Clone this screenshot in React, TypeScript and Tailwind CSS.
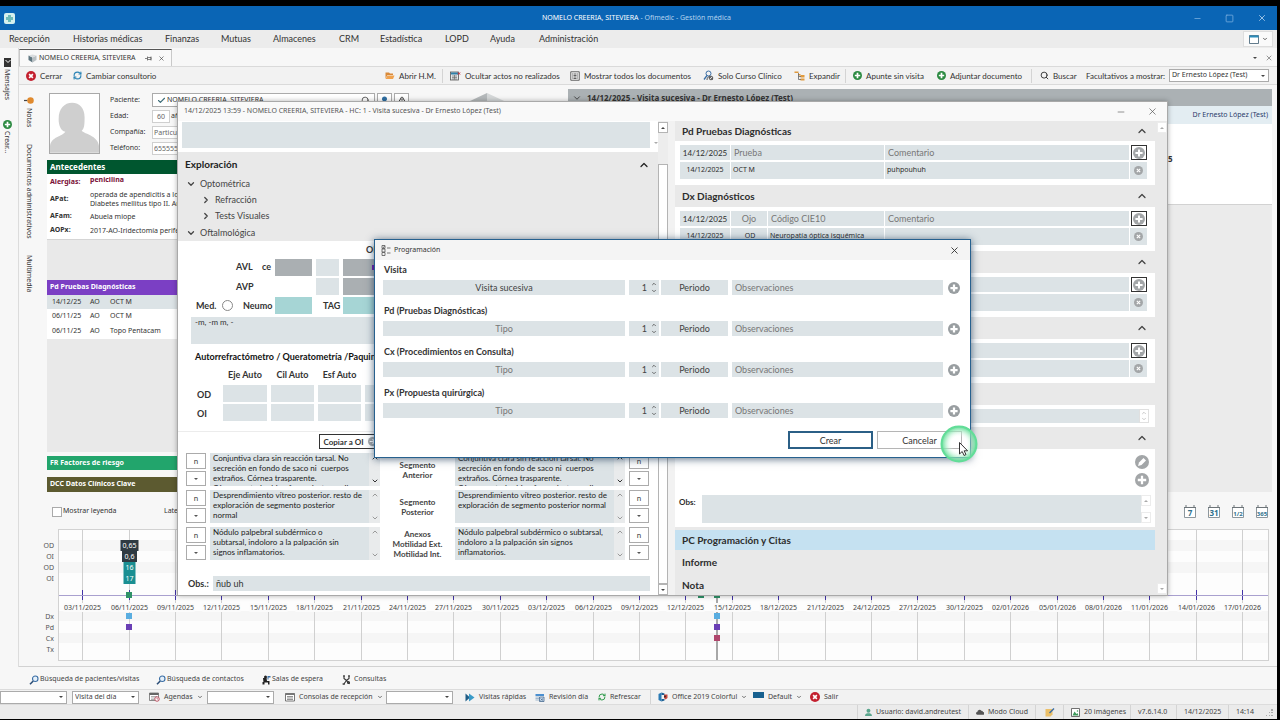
import type { ReactNode } from "react";
import { Check, ChevronDown, ChevronRight, ChevronUp, Minus, RefreshCw, Search, Square, TriangleAlert, X } from "lucide-react";

const menu = [
  { label: "Recepción", width: "w-[64px]" },
  { label: "Historias médicas", width: "w-[92px]" },
  { label: "Finanzas", width: "w-[56px]" },
  { label: "Mutuas", width: "w-[52px]" },
  { label: "Almacenes", width: "w-[66px]" },
  { label: "CRM", width: "w-[41px]" },
  { label: "Estadística", width: "w-[65px]" },
  { label: "LOPD", width: "w-[45px]" },
  { label: "Ayuda", width: "w-[49px]" },
  { label: "Administración", width: "w-[80px]" },
];

const antecedentes = [
  { label: "APat:", lines: ["operada de apendicitis a los 12 años", "Diabetes mellitus tipo II. Artrosis"], height: "h-[20px]" },
  { label: "AFam:", lines: ["Abuela miope"], height: "h-[14px]" },
  { label: "AOPx:", lines: ["2017-AO-Iridectomía periférica"], height: "h-[15px]" },
];

const pruebas = [
  { date: "14/12/25", eye: "AO", name: "OCT M" },
  { date: "06/11/25", eye: "AO", name: "OCT M" },
  { date: "06/11/25", eye: "AO", name: "Topo Pentacam" },
];

const segments = [
  {
    label: ["Segmento", "Anterior"],
    left: "Conjuntiva clara sin reacción tarsal. No\nsecreción en fondo de saco ni  cuerpos\nextraños. Córnea trasparente.\nCámara anterior bien formada, tranquila",
    right: "Conjuntiva clara sin reacción tarsal. No\nsecreción en fondo de saco ni  cuerpos\nextraños. Córnea trasparente.\nCámara anterior bien formada, tranquila",
    scroll: true,
  },
  {
    label: ["Segmento", "Posterior"],
    left: "Desprendimiento vítreo posterior. resto de\nexploración de segmento posterior\nnormal",
    right: "Desprendimiento vítreo posterior. resto de\nexploración de segmento posterior normal",
    scroll: false,
  },
  {
    label: ["Anexos", "Motilidad Ext.", "Motilidad Int."],
    left: "Nódulo palpebral subdérmico o\nsubtarsal, indoloro a la palpación sin\nsignos inflamatorios.",
    right: "Nódulo palpebral subdérmico o subtarsal,\nindoloro a la palpación sin signos\ninflamatorios.",
    scroll: false,
  },
];

const plans = [
  { id: "visita", label: "Visita", value: "Visita sucesiva" },
  { id: "pd", label: "Pd (Pruebas Diagnósticas)", value: "" },
  { id: "cx", label: "Cx (Procedimientos en Consulta)", value: "" },
  { id: "px", label: "Px (Propuesta quirúrgica)", value: "" },
];

const dates = [
  "03/11/2025", "06/11/2025", "09/11/2025", "12/11/2025", "15/11/2025", "18/11/2025", "21/11/2025", "24/11/2025", "27/11/2025",
  "30/11/2025", "03/12/2025", "06/12/2025", "09/12/2025", "12/12/2025", "15/12/2025", "18/12/2025", "21/12/2025", "24/12/2025",
  "27/12/2025", "30/12/2025", "02/01/2026", "05/01/2026", "08/01/2026", "11/01/2026", "14/01/2026", "17/01/2026",
];

/* ---------- icons ---------- */

function Disc({ color, size = 10, cross = false, width = 2.6 }: { color: string; size?: number; cross?: boolean; width?: number }) {
  return (
    <svg width={size} height={size} viewBox="0 0 16 16" className="shrink-0">
      <circle cx="8" cy="8" r="8" fill={color} />
      <path d={cross ? "M5 5l6 6M11 5l-6 6" : "M8 3.2v9.6M3.2 8h9.6"} stroke="#fff" strokeWidth={width} />
    </svg>
  );
}

function GreenPlus() {
  return <Disc color="#2b8a41" size={9} width={3} />;
}

function FolderIcon() {
  return (
    <svg width="10" height="9" viewBox="0 0 20 18" className="shrink-0">
      <path d="M1 3h7l2 2h6v3H5l-4 7z" fill="#d98a3a" />
      <path d="M5 9h14l-3 7H1z" fill="#f0a24e" />
    </svg>
  );
}

function HideIcon() {
  return (
    <svg width="11" height="10" viewBox="0 0 22 20" className="shrink-0">
      <rect x="1" y="2" width="16" height="16" fill="#e4e8ea" stroke="#555" strokeWidth="1.6" />
      <path d="M2 3h14v4H2z" fill="#2f7fa8" />
      <path d="M4 10h10M4 13h10M4 16h10M9 8v9" stroke="#666" strokeWidth="1.3" />
      <path d="M16 3l4 4M20 3l-4 4" stroke="#cc2030" strokeWidth="2" />
    </svg>
  );
}

function DocIcon() {
  return (
    <svg width="10" height="10" viewBox="0 0 20 20" className="shrink-0">
      <path d="M1.5 1.5h17v17h-17z" fill="#f4f4f4" stroke="#555" strokeWidth="1.8" />
      <path d="M5 4v12M15 4v12" stroke="#888" strokeWidth="1.2" />
      <path d="M7 6h6M7 9h6M7 12h6M7 15h6" stroke="#444" strokeWidth="1.7" />
    </svg>
  );
}

function PersonSearchIcon() {
  return (
    <svg width="11" height="11" viewBox="0 0 22 22" className="shrink-0" fill="none">
      <circle cx="11" cy="7" r="5" stroke="#3a6ea5" strokeWidth="2" />
      <path d="M8 11l-6 8" stroke="#3a6ea5" strokeWidth="2.6" />
      <path d="M8 20c0-4 2-6 4-7l8 6" stroke="#444" strokeWidth="1.8" />
      <circle cx="16" cy="16" r="3.6" stroke="#444" strokeWidth="1.8" />
    </svg>
  );
}

function TreeIcon() {
  return (
    <svg width="11" height="10" viewBox="0 0 22 20" className="shrink-0">
      <path d="M1 1h8v3H1zM8 6h5v3H8z" fill="#e09a3e" />
      <path d="M13 8h8v5h-8zM13 15h8v4h-8z" fill="#e09a3e" />
      <path d="M9 4v13h5M9 11h5" stroke="#666" strokeWidth="1.6" fill="none" />
    </svg>
  );
}

function CubeIcon() {
  return (
    <svg width="9" height="9" viewBox="0 0 18 18" className="shrink-0">
      <path d="M1 3l8 4v10l-8-5z" fill="#5f7680" />
      <path d="M9 7l8-4v9l-8 5z" fill="#b9c0c3" />
      <path d="M1 3l8-2 8 2-8 4z" fill="#d9dddf" />
    </svg>
  );
}

function PinIcon() {
  return (
    <svg width="7" height="7" viewBox="0 0 14 14" className="shrink-0" fill="none" stroke="#555" strokeWidth="1.4">
      <path d="M0 7h5M5 3v8M5 5h7v4H5M12 3v8" />
    </svg>
  );
}

function WindowIcon() {
  return (
    <svg width="10" height="9" viewBox="0 0 20 18" className="shrink-0">
      <path d="M1 1h18v16H1z" fill="#fff" stroke="#3b5a70" strokeWidth="1.6" />
      <path d="M1 1h18v4H1z" fill="#2b8cba" />
    </svg>
  );
}

function MagnifierIcon() {
  return (
    <svg width="10" height="10" viewBox="0 0 20 20" className="shrink-0">
      <circle cx="12.5" cy="7.5" r="5.5" fill="#e5f0fa" stroke="#3a6ea5" strokeWidth="2.2" />
      <path d="M8.5 12L2 18.5" stroke="#2d4f78" strokeWidth="3.2" />
    </svg>
  );
}

function ChairIcon() {
  return (
    <svg width="9" height="10" viewBox="0 0 18 20" className="shrink-0" fill="#222">
      <circle cx="7" cy="4" r="3" />
      <path d="M2 6h7l1 6h5v7h-3v-4H3z" />
      <path d="M11 2h6v3h-4v4h-2z" fill="#3a6ea5" />
      <path d="M1 14h4v5H1z" />
    </svg>
  );
}

function ConsultIcon() {
  return (
    <svg width="9" height="10" viewBox="0 0 18 20" className="shrink-0" fill="none" stroke="#333" strokeWidth="2.2">
      <path d="M4 1v6l5 4 5-4V1" />
      <path d="M2 2h4M12 2h4" />
      <path d="M9 11l-6 8M9 11l6 7" />
      <circle cx="13" cy="15" r="2" />
      <path d="M1 18h5" />
    </svg>
  );
}

function AgendaIcon() {
  return (
    <svg width="11" height="10" viewBox="0 0 22 20" className="shrink-0">
      <path d="M1 2h18v15H1z" fill="#fff" stroke="#666" strokeWidth="1.5" />
      <path d="M1 2h18v4H1z" fill="#666" />
      <path d="M4 9h12M4 12h8M4 15h7" stroke="#888" strokeWidth="1.3" />
      <circle cx="16" cy="14" r="4.5" fill="#fff" stroke="#b84556" strokeWidth="1.8" />
      <path d="M16 11.500V14h2.500" stroke="#b84556" strokeWidth="1.3" fill="none" />
    </svg>
  );
}

function ConsoleIcon() {
  return (
    <svg width="10" height="9" viewBox="0 0 20 18" className="shrink-0">
      <path d="M1 1h18v15H1z" fill="#fff" stroke="#555" strokeWidth="1.6" />
      <path d="M1 1h18v3H1z" fill="#777" />
      <path d="M4 7h12M4 10h12M4 13h12" stroke="#666" strokeWidth="1.4" />
    </svg>
  );
}

function FastIcon() {
  return (
    <svg width="10" height="9" viewBox="0 0 20 18" className="shrink-0">
      <path d="M1 1l9 8-9 8z" fill="#1f5c85" />
      <path d="M8 1l11 8-11 8z" fill="#3a9bc8" />
    </svg>
  );
}

function ReviewIcon() {
  return (
    <svg width="10" height="9" viewBox="0 0 20 18" className="shrink-0">
      <path d="M1 2h17v4H1z" fill="#4a8fd0" />
      <path d="M1 8h7M1 11h7M1 14h7" stroke="#8aa8c4" strokeWidth="1.6" />
      <path d="M9 8h9v9H9z" fill="#cfe0f0" stroke="#3d6288" strokeWidth="1.5" />
      <path d="M11 11l5 4M16 11l-5 4" stroke="#3d6288" strokeWidth="1.4" />
    </svg>
  );
}

function OfficeIcon() {
  return (
    <svg width="10" height="10" viewBox="0 0 20 20" className="shrink-0">
      <path d="M1 4l6-3v18l-6-3z" fill="#2a7bb5" />
      <path d="M7 1l6 2v3H7z" fill="#1c5f93" />
      <path d="M7 14h6v3l-6 2z" fill="#1c5f93" />
      <path d="M12 5h7v7l-4 3-3-3z" fill="#c8463c" />
      <circle cx="14" cy="9" r="2" fill="#3a2a2a" />
    </svg>
  );
}

function CalendarIcon({ text }: { text: string }) {
  return (
    <svg width="14" height="14" viewBox="0 0 14 14">
      <path d="M1.5 2.5h11v10h-11z" fill="#fff" stroke="#8d979d" />
      <path d="M1 2h12v1H1z" fill="#6d7479" />
      <path d="M3 0v3M11 0v3" stroke="#6d7479" />
      <text x="7" y="10.5" textAnchor="middle" fontSize={text.length > 2 ? 6 : 8} fontWeight="700" fill="#2f718d">
        {text}
      </text>
    </svg>
  );
}

/* ---------- small parts ---------- */

function ToolButton({ icon, label, width, caret }: { icon: ReactNode; label: string; width: string; caret?: boolean }) {
  return (
    <button type="button" className={`flex shrink-0 items-center gap-1 whitespace-nowrap ${width}`}>
      {icon}
      {label}
      {caret && <ChevronDown size={6} strokeWidth={3} />}
    </button>
  );
}

function Combo({ id, label, value, width }: { id?: string; label: string; value?: string; width: string }) {
  return (
    <span className={`relative flex h-[13px] shrink-0 items-center border border-[#ababab] bg-white ${width}`}>
      <select id={id} aria-label={label} className="h-full w-full appearance-none px-[2px] outline-none">
        <option>{value ?? ""}</option>
      </select>
      <svg width="4" height="2" viewBox="0 0 4 2" className="pointer-events-none absolute right-[3px]">
        <path d="M0 0h4L2 2z" fill="#444" />
      </svg>
    </span>
  );
}

function Divider() {
  return <span className="h-[14px] w-px shrink-0 bg-[#d4d4d4]" />;
}

function ScrollButton({ up, faint }: { up?: boolean; faint?: boolean }) {
  return (
    <button
      type="button"
      aria-label={up ? "Subir" : "Bajar"}
      className={`flex h-[11px] w-[10px] items-center justify-center border bg-white ${faint ? "border-[#ececec]" : "border-[#b4b4b4]"}`}
    >
      <svg width="4" height="2" viewBox="0 0 4 2">
        <path d={up ? "M0 2h4L2 0z" : "M0 0h4L2 2z"} fill={faint ? "#aaa" : "#444"} />
      </svg>
    </button>
  );
}

function Notes({ label, text, scroll }: { label: string; text: string; scroll: boolean }) {
  return (
    <div className="flex h-[33px] w-[170px] shrink-0">
      <textarea
        aria-label={label}
        defaultValue={text}
        className="w-[159px] resize-none overflow-hidden bg-[#dce3e6] pl-[3px] text-[8px] leading-[10px] whitespace-pre text-[#222] outline-none"
      />
      <span className={`flex w-[11px] flex-col items-center justify-between bg-[#e9ebec] py-px ${scroll ? "text-[#333]" : "text-[#9a9a9a]"}`}>
        <ChevronUp size={8} strokeWidth={3} />
        <ChevronDown size={8} strokeWidth={3} />
      </span>
    </div>
  );
}

function NormalButtons() {
  return (
    <div className="flex w-[20px] shrink-0 flex-col gap-[2px]">
      <button type="button" className="h-[16px] border border-[#ababab] bg-white text-[8px] leading-none text-[#444]">
        n
      </button>
      <button type="button" aria-label="Más" className="flex h-[15px] items-center justify-center border border-[#ababab] bg-white">
        <svg width="4" height="2" viewBox="0 0 4 2">
          <path d="M0 0h4L2 2z" fill="#555" />
        </svg>
      </button>
    </div>
  );
}

function SectionHead({ title, first, open = true }: { title?: string; first?: boolean; open?: boolean }) {
  return (
    <div className={`flex shrink-0 items-center justify-between bg-[#e9e9e9] px-[7px] ${first ? "h-[20px]" : "h-[22px]"}`}>
      <h3 className="text-[10px] font-bold">{title}</h3>
      {open && <ChevronUp size={12} strokeWidth={2.5} className="text-[#444]" />}
    </div>
  );
}

function SectionRows({ fields, values }: { fields: string[]; values: string[] }) {
  const cols = fields.length === 3 ? "grid-cols-[50px_36px_116px_1fr_17px]" : "grid-cols-[50px_153px_1fr_17px]";
  return (
    <div className="h-[44px] shrink-0 bg-white pt-1 pr-2 pl-[5px]">
      <div className={`grid h-[15px] items-stretch gap-x-px ${cols}`}>
        <span className="flex items-center justify-center bg-[#dce3e6] text-[8px]">14/12/2025</span>
        {fields.map((field) => (
          <input key={field} aria-label={field} placeholder={field} className={`min-w-0 bg-[#dce3e6] px-[3px] text-[9px] outline-none placeholder:text-[#777] ${field === "Ojo" ? "text-center" : ""}`} />
        ))}
        <button type="button" aria-label="Añadir" className="ml-px flex items-center justify-center border border-[#333] bg-white">
          <Disc color="#a3a6a8" size={12} />
        </button>
      </div>
      <div className={`mt-[2px] grid h-[17px] items-stretch gap-x-px text-[7px] ${cols}`}>
        <span className="flex items-center justify-center bg-[#dce3e6] font-['Noto_Sans',sans-serif]">14/12/2025</span>
        {values.map((value, i) => (
          <span key={i} className={`flex items-center overflow-hidden bg-[#dce3e6] pl-[2px] font-['Noto_Sans',sans-serif] whitespace-nowrap ${value === "OD" ? "justify-center" : ""}`}>
            {value}
          </span>
        ))}
        <button type="button" aria-label="Quitar" className="flex items-center justify-center bg-[#dce3e6]">
          <Disc color="#a3a6a8" size={9} cross width={2} />
        </button>
      </div>
    </div>
  );
}

/* ---------- main window ---------- */

function Toolbar() {
  return (
    <div className="flex h-[19px] shrink-0 items-center border-y border-[#dadada] bg-[#f2f2f2] pr-2 pl-[7px] text-[8px]">
      <ToolButton width="w-[47px]" icon={<Disc color="#c3202f" cross />} label="Cerrar" />
      <ToolButton width="w-[90px]" icon={<RefreshCw size={9} strokeWidth={3} className="text-[#2b83b5]" />} label="Cambiar consultorio" />
      <div className="ml-auto flex items-center">
        <ToolButton width="w-[57px]" icon={<FolderIcon />} label="Abrir H.M." />
        <Divider />
        <ToolButton width="ml-[7px] w-[120px]" icon={<HideIcon />} label="Ocultar actos no realizados" />
        <ToolButton width="w-[133px]" icon={<DocIcon />} label="Mostrar todos los documentos" />
        <ToolButton width="w-[91px]" icon={<PersonSearchIcon />} label="Solo Curso Clínico" />
        <ToolButton width="w-[51px]" icon={<TreeIcon />} label="Expandir" />
        <Divider />
        <ToolButton width="ml-[7px] w-[84px]" icon={<GreenPlus />} label="Apunte sin visita" />
        <ToolButton width="w-[94px]" icon={<GreenPlus />} label="Adjuntar documento" />
        <Divider />
        <ToolButton width="ml-2 w-[46px]" icon={<Search size={9} strokeWidth={2.5} />} label="Buscar" />
        <label htmlFor="facultativos" className="w-[83px] whitespace-nowrap">Facultativos a mostrar:</label>
        <span className="font-['Noto_Sans',sans-serif] text-[7px]">
          <Combo id="facultativos" label="Facultativos a mostrar" value="Dr Ernesto López (Test)" width="w-[100px]" />
        </span>
      </div>
    </div>
  );
}

function PatientForm() {
  return (
    <div className="flex h-[75px] shrink-0 pt-2 pl-[2px]">
      <svg width="51" height="61" viewBox="0 0 51 61" className="shrink-0 border border-[#a9a9a9] bg-white">
        <path d="M9 26C9 15 15 9 23 9s13 6 13 15c0 6 0 12-3 14 2 3 17 5 18 16v7H0v-7c1-10 13-10 16-15-5-1-7-7-7-13z" fill="#cfcfcf" />
      </svg>
      <div className="ml-[10px] flex flex-col gap-[2px]">
        <div className="flex h-[14px] items-center">
          <label htmlFor="paciente" className="w-[42px]">Paciente:</label>
          <span className="flex h-full w-[223px] items-center border border-[#ababab] bg-white pl-1">
            <Check size={9} strokeWidth={3} className="text-[#3c6c78]" />
            <input id="paciente" defaultValue="NOMELO CREERIA, SITEVIERA" className="min-w-0 flex-1 pl-px outline-none" />
            <Search size={9} className="mr-1" />
          </span>
          <button type="button" aria-label="Ficha" className="ml-[2px] flex h-full w-[15px] items-center justify-center border border-[#ababab] bg-white">
            <svg width="7" height="9" viewBox="0 0 14 18"><path d="M7 1a5 5 0 015 5c0 4-5 5-5 11 0-6-5-7-5-11a5 5 0 015-5z" fill="#2f6fa3" /></svg>
          </button>
          <button type="button" aria-label="Avisos" className="ml-[2px] flex h-full w-[15px] items-center justify-center border border-[#ababab] bg-white">
            <TriangleAlert size={8} strokeWidth={3} />
          </button>
        </div>
        <div className="flex h-[14px] items-center">
          <label htmlFor="edad" className="w-[42px]">Edad:</label>
          <input id="edad" defaultValue="60" className="h-[13px] w-[18px] border border-[#cfcfcf] bg-white text-center text-[#666] outline-none" />
          <span className="ml-px">años</span>
        </div>
        <div className="flex h-[14px] items-center">
          <label htmlFor="compania" className="w-[42px]">Compañía:</label>
          <input id="compania" defaultValue="Particular" className="h-[13px] w-[120px] border border-[#cfcfcf] bg-white px-px text-[#666] outline-none" />
        </div>
        <div className="flex h-[14px] items-center">
          <label htmlFor="telefono" className="w-[42px]">Teléfono:</label>
          <input id="telefono" defaultValue="655555555" className="h-[13px] w-[120px] border border-[#cfcfcf] bg-white px-px text-[#666] outline-none" />
        </div>
      </div>
      <svg width="72" height="34" viewBox="0 0 72 34" className="ml-[42px] shrink-0">
        <path d="M36 0L0 17l36 17z" fill="#b5b9bb" />
        <path d="M36 0l36 17-36 17z" fill="#d5d8d9" />
      </svg>
    </div>
  );
}

function PatientSummary() {
  return (
    <div className="flex w-[518px] shrink-0 flex-col font-['Noto_Sans',sans-serif] text-[7px]">
      <PatientForm />
      <h2 className="flex h-[14px] shrink-0 items-center bg-[#00562f] px-[3px] text-[8px] font-bold text-white">Antecedentes</h2>
      <div className="h-[66px] shrink-0 border-b border-[#d5d5d5] bg-white px-[3px] pt-px">
        <div className="flex h-[14px] font-bold text-[#7a1038]">
          <span className="w-[40px] pt-[2px]">Alergias:</span>
          <span className="leading-[9px]">penicilina</span>
        </div>
        {antecedentes.map((row) => (
          <div key={row.label} className={`flex items-center ${row.height}`}>
            <span className="w-[40px] font-bold">{row.label}</span>
            <div className="leading-[9px]">
              {row.lines.map((line) => (
                <p key={line} className="whitespace-nowrap">{line}</p>
              ))}
            </div>
          </div>
        ))}
      </div>
      <div className="h-[40px] shrink-0 bg-[#e9e9e9]" />
      <h2 className="flex h-[15px] shrink-0 items-center bg-[#7b3fc4] px-[3px] font-bold text-white">Pd Pruebas Diagnósticas</h2>
      <table className="w-full shrink-0 bg-white text-left">
        <tbody>
          {pruebas.map((row, i) => (
            <tr key={i} className={i === 0 ? "h-[14px] bg-[#dce3e6]" : "h-[15px]"}>
              <td className="w-[43px] p-0 pl-[5px]">{row.date}</td>
              <td className="w-[20px] p-0">{row.eye}</td>
              <td className="p-0">{row.name}</td>
            </tr>
          ))}
        </tbody>
      </table>
      <div className="h-[113px] shrink-0 bg-[#e9e9e9]" />
      <h2 className="mt-1 flex h-[14px] shrink-0 items-center bg-[#22a56c] px-[3px] font-bold text-white">FR Factores de riesgo</h2>
      <h2 className="mt-[7px] flex h-[15px] shrink-0 items-center bg-[#5c5a30] px-[3px] font-bold text-white">DCC Datos Clínicos Clave</h2>
    </div>
  );
}

function VisitList() {
  return (
    <div className="mt-1 ml-[3px] flex min-w-0 flex-1 flex-col font-['Noto_Sans',sans-serif] text-[7px]">
      <h2 className="flex h-[17px] shrink-0 items-center gap-[5px] bg-[#abb1b4] pl-1 text-[8px] font-bold">
        <ChevronDown size={10} />
        14/12/2025 - Visita sucesiva - Dr Ernesto López (Test)
      </h2>
      <p className="flex h-[18px] shrink-0 items-center justify-end bg-[#e3edf2] pr-1 text-[#2a3a6a]">Dr Ernesto López (Test)</p>
      <div className="flex h-[81px] shrink-0 justify-end border-b border-[#d2d2d2] bg-white">
        <span className="w-[104px] pt-[29px] text-[8px] font-bold">5</span>
      </div>
      <div className="flex-1 bg-[#ebebeb]" />
    </div>
  );
}

const eyeRows = [
  { name: "OD", y: 16 },
  { name: "OI", y: 27 },
  { name: "OD", y: 38 },
  { name: "OI", y: 49 },
  { name: "Dx", y: 87 },
  { name: "Pd", y: 98 },
  { name: "Cx", y: 109 },
  { name: "Tx", y: 120 },
];

const values = [
  { text: "0,65", y: 11, width: 18, color: "#2f3b43" },
  { text: "0,6", y: 22, width: 15, color: "#2f3b43" },
  { text: "16", y: 33, width: 12, color: "#1a8f92" },
  { text: "17", y: 44, width: 12, color: "#1a8f92" },
];

// one column every three days
const tickX = (i: number) => Math.floor(42.7 + i * 46.4) + 0.5;

function Timeline() {
  return (
    <svg width="100%" height="132" className="shrink-0 font-['Noto_Sans',sans-serif] text-[7px]">
      <rect x="18.5" y="0.5" width="1210" height="131" fill="#fdfdfd" stroke="#d2d2d2" />
      <path d="M19 11h1209v11H19zM19 33h1209v11H19zM19 82h1209v10H19zM19 104h1209v10H19z" fill="#f6f6f6" />
      <path d="M677 66v65" stroke="#a8a8a8" strokeWidth="2" />
      {dates.map((date, i) => (
        <g key={date}>
          <path d={`M${tickX(i)} 1v130`} stroke="#d0d0d0" />
          <rect x={tickX(i) - 19} y="74" width="38" height="9" fill="#fbfbfb" />
          <path d={`M${tickX(i)} 61v10`} stroke="#4334a8" />
          <text x={tickX(i)} y="80.5" textAnchor="middle" fill="#444">{date}</text>
        </g>
      ))}
      <path d="M19 66.5h1209" stroke="#a9a0cf" />
      {eyeRows.map((row, i) => (
        <text key={i} x="14" y={row.y + 2.5} textAnchor="end" fill="#555">{row.name}</text>
      ))}
      {values.map((v) => (
        <g key={v.text}>
          <rect x={89.5 - v.width / 2} y={v.y} width={v.width} height="11" fill={v.color} />
          <text x="89.5" y={v.y + 8} textAnchor="middle" fill="#fff">{v.text}</text>
        </g>
      ))}
      <path d="M86 63h6v6h-6z" fill="#2f9268" />
      <path d="M86 84h6v6h-6z" fill="#59ade0" />
      <path d="M86 95h6v6h-6z" fill="#6a3fb5" />
      <path d="M658 63h6v6h-6zM674 63h6v6h-6z" fill="#2f9268" />
      <path d="M674 84h6v6h-6z" fill="#59ade0" />
      <path d="M674 95h6v6h-6z" fill="#6a3fb5" />
      <path d="M674 106h6v6h-6z" fill="#b0466c" />
    </svg>
  );
}

/* ---------- visit window ---------- */

function Exploration() {
  return (
    <div className="flex h-full w-[490px] shrink-0 bg-white">
      <div className="flex min-w-0 flex-1 flex-col">
        <div className="flex h-[31px] shrink-0 items-end pt-px pb-1 pl-1">
          <textarea aria-label="Motivo" className="h-full w-[469px] resize-none bg-[#dce3e6] outline-none" />
          <svg width="4" height="2" viewBox="0 0 4 2" className="mb-1 ml-1">
            <path d="M0 0h4L2 2z" fill="#aaa" />
          </svg>
        </div>
        <div className="h-[89px] shrink-0 bg-[#e9e9e9] pl-[7px] text-[9px] text-[#444]">
          <h3 className="flex h-[24px] items-center justify-between pt-px pr-2 text-[10px] font-bold text-[#222]">
            Exploración
            <ChevronUp size={12} strokeWidth={2.5} />
          </h3>
          <p className="flex h-4 items-center gap-1 pl-px"><ChevronDown size={10} strokeWidth={3} />Optométrica</p>
          <p className="flex h-4 items-center gap-1 pl-4"><ChevronRight size={10} strokeWidth={3} />Refracción</p>
          <p className="flex h-4 items-center gap-1 pl-4"><ChevronRight size={10} strokeWidth={3} />Tests Visuales</p>
          <p className="flex h-[17px] items-center gap-1 pl-px"><ChevronDown size={10} strokeWidth={3} />Oftalmológica</p>
        </div>

        <div className="flex h-[17px] shrink-0 items-center pl-[188px] text-[9px] font-bold">OD</div>
        <div className="flex shrink-0 flex-col gap-[2px] pl-[18px] text-[9px] font-bold text-[#333]">
          <div className="flex h-[18px] items-center">
            <span className="w-[66px] pl-10">AVL</span>
            <span className="w-[13px]">ce</span>
            <input aria-label="AVL ce OD" className="h-[17px] w-[37px] bg-[#aaafb2]" />
            <input aria-label="AVL estenopeico OD" className="ml-1 h-[17px] w-[23px] bg-[#dce3e6]" />
            <input aria-label="AVL sc OD" className="ml-1 h-[17px] w-[37px] bg-[#aaafb2]" />
            <svg width="5" height="5" viewBox="0 0 5 5" className="-ml-[8px]"><path d="M0 0h5v5H0z" fill="#6f1fb0" /></svg>
          </div>
          <div className="flex h-[17px] items-center">
            <span className="w-[120px] pl-10">AVP</span>
            <input aria-label="AVP OD" className="h-full w-[23px] bg-[#dce3e6]" />
            <input aria-label="AVP sc OD" className="ml-1 h-full w-[37px] bg-[#aaafb2]" />
          </div>
          <div className="flex h-[17px] items-center">
            <label htmlFor="med" className="w-[26px]">Med.</label>
            <input id="med" type="radio" className="h-[11px] w-[11px] appearance-none rounded-full border border-[#888] bg-white" />
            <label htmlFor="neumo" className="w-[42px] pl-[10px]">Neumo</label>
            <input id="neumo" className="h-full w-[37px] bg-[#a6d5d5]" />
            <label htmlFor="tag" className="w-[31px] pl-[11px]">TAG</label>
            <input id="tag" className="h-full w-[37px] bg-[#a6d5d5]" />
          </div>
        </div>
        <textarea
          aria-label="Medición"
          defaultValue="-m, -m m, -"
          className="mt-[3px] ml-[13px] h-[27px] w-[459px] shrink-0 resize-none bg-[#dce3e6] px-1 text-[8px] leading-[11px] outline-none"
        />
        <h4 className="flex h-[24px] shrink-0 items-center pt-px pl-[17px] text-[9px] font-bold whitespace-nowrap text-[#111]">
          Autorrefractómetro / Queratometría /Paquimetría
        </h4>
        <div className="grid shrink-0 grid-cols-[22px_44px_43px_43px_43px] gap-x-1 pl-[19px] text-[9px] font-bold text-[#333]">
          <span />
          {["Eje Auto", "Cil Auto", "Esf Auto", "K1"].map((head) => (
            <span key={head} className="h-[17px] text-center whitespace-nowrap">{head}</span>
          ))}
          {["OD", "OI"].map((eye) => [
            <span key={eye} className="flex h-[19px] items-center">{eye}</span>,
            ...[1, 2, 3, 4].map((n) => <input key={eye + n} aria-label={`${eye} ${n}`} className="h-[17px] min-w-0 bg-[#dce3e6]" />),
          ])}
        </div>
        <div className="mt-2 flex h-[22px] shrink-0 items-start border-t border-[#ececec] pt-[2px] pl-[141px]">
          <button type="button" className="flex h-[15px] w-[62px] items-center justify-center gap-1 border border-[#333] bg-white text-[8px] font-bold whitespace-nowrap">
            Copiar a OI
            <svg width="9" height="9" viewBox="0 0 16 16"><circle cx="8" cy="8" r="8" fill="#a3a6a8" /><path d="M3 8h9M8 4l4 4-4 4" stroke="#fff" strokeWidth="2" fill="none" /></svg>
          </button>
        </div>
        <div className="flex shrink-0 flex-col gap-1 pl-2">
          {segments.map((segment) => (
            <div key={segment.label.join()} className="flex h-[33px]">
              <NormalButtons />
              <span className="w-1" />
              <Notes label={`${segment.label.join(" ")} OD`} text={segment.left} scroll={segment.scroll} />
              <div className="flex w-[75px] shrink-0 flex-col items-center justify-center text-[8px] leading-[10px] font-bold whitespace-nowrap text-[#444]">
                {segment.label.map((line) => (
                  <span key={line}>{line}</span>
                ))}
              </div>
              <Notes label={`${segment.label.join(" ")} OI`} text={segment.right} scroll={segment.scroll} />
              <span className="w-1" />
              <NormalButtons />
            </div>
          ))}
        </div>
        <div className="mt-4 flex h-[15px] shrink-0 items-center pl-[10px] text-[9px]">
          <label htmlFor="obs-exploracion" className="w-[25px] font-bold">Obs.:</label>
          <input id="obs-exploracion" defaultValue="ñub uh" className="h-full w-[437px] bg-[#dce3e6] px-[3px] outline-none" />
        </div>
      </div>
      <div className="flex w-[10px] shrink-0 flex-col bg-[#ededed] pt-px">
        <ScrollButton up />
        <div className="mt-[31px] flex-1 border border-[#b4b4b4] bg-white" />
        <ScrollButton />
      </div>
    </div>
  );
}

function VisitSections() {
  return (
    <div className="flex min-w-0 flex-1 bg-[#e9e9e9]">
      <div className="flex min-w-0 flex-1 flex-col overflow-hidden border-l-[7px] border-[#f2f2f2] text-[#2d2d2d]">
        <SectionHead title="Pd Pruebas Diagnósticas" first />
        <SectionRows fields={["Prueba", "Comentario"]} values={["OCT M", "puhpouhuh"]} />
        <SectionHead title="Dx Diagnósticos" />
        <SectionRows fields={["Ojo", "Código CIE10", "Comentario"]} values={["OD", "Neuropatía óptica isquémica", ""]} />
        <SectionHead title="Tx Tratamientos" />
        <SectionRows fields={["Tratamiento", "Comentario"]} values={["", ""]} />
        <SectionHead title="Cx Procedimientos" />
        <SectionRows fields={["Procedimiento", "Comentario"]} values={["", ""]} />
        <SectionHead title="Px Propuesta" open={false} />
        <div className="flex h-[22px] shrink-0 bg-white py-1 pr-[6px] pl-[5px]">
          <input aria-label="Propuesta" className="min-w-0 flex-1 bg-[#dce3e6]" />
          <span className="flex w-[10px] flex-col items-center justify-between border border-[#e0e0e0] text-[#999]">
            <ChevronUp size={6} />
            <ChevronDown size={6} />
          </span>
        </div>
        <SectionHead title="Rx Recetas" />
        <div className="flex h-[78px] shrink-0 flex-col bg-white">
          <div className="flex h-[46px] flex-col items-end gap-1 pt-[6px] pr-[6px]">
            <button type="button" aria-label="Editar">
              <svg width="14" height="14" viewBox="0 0 14 14">
                <circle cx="7" cy="7" r="7" fill="#a3a6a8" />
                <path d="M3 11l1-3.500L8.500 3l2.500 2.500L6.500 10z" fill="#fff" />
              </svg>
            </button>
            <button type="button" aria-label="Añadir receta">
              <Disc color="#a3a6a8" size={14} />
            </button>
          </div>
          <div className="flex h-[28px] pr-1 pl-1">
            <label htmlFor="obs" className="w-[23px] pt-px text-[8px] font-bold">Obs:</label>
            <textarea id="obs" className="min-w-0 flex-1 resize-none bg-[#dce3e6] outline-none" />
            <span className="flex w-[10px] flex-col justify-between">
              <ScrollButton up faint />
              <ScrollButton faint />
            </span>
          </div>
        </div>
        <div className="mt-[3px] flex h-[20px] shrink-0 items-center bg-[#c5e1f1] px-[7px]">
          <h3 className="text-[10px] font-bold">PC Programación y Citas</h3>
        </div>
        <div className="flex h-[25px] shrink-0 items-center px-[7px]"><h3 className="text-[10px] font-bold">Informe</h3></div>
        <div className="flex h-[20px] shrink-0 items-center px-[7px]"><h3 className="text-[10px] font-bold">Nota</h3></div>
      </div>
      <div className="flex w-[12px] shrink-0 flex-col justify-between py-px pl-[2px]">
        <ScrollButton up faint />
        <ScrollButton faint />
      </div>
    </div>
  );
}

function ProgramDialog() {
  return (
    <section className="pointer-events-auto relative w-[597px] border border-[#27618f] bg-white shadow-[0_1px_8px_rgba(20,50,80,0.7)]">
      <header className="flex h-[20px] items-center bg-[#f4f4f4] px-[6px] font-['Noto_Sans',sans-serif] text-[7px]">
        <svg width="10" height="11" viewBox="0 0 20 22" fill="none" stroke="#555" strokeWidth="1.6">
          <path d="M2 1h6v6H2zM2 8h6v6H2zM2 15h6v6H2zM12 6h7M12 16h7M3.500 4l1.500 1.500L7 2" />
        </svg>
        <h2 className="ml-[3px]">Programación</h2>
        <button type="button" aria-label="Cerrar" className="ml-auto mr-1"><X size={11} /></button>
      </header>
      <form className="px-2">
        {plans.map((plan) => (
          <div key={plan.id} role="group" aria-label={plan.label} className="h-[41px]">
            <label htmlFor={plan.id} className="flex h-[20px] items-center pl-px text-[9px] font-bold text-[#333]">{plan.label}</label>
            <div className="flex h-[15px] text-[9px] text-[#444]">
              <input id={plan.id} defaultValue={plan.value} placeholder="Tipo" className="w-[242px] bg-[#dce3e6] text-center outline-none placeholder:text-[#777]" />
              <span className="ml-1 flex w-[30px] items-center bg-[#dce3e6] pr-[2px]">
                <input aria-label="Cantidad" defaultValue="1" className="min-w-0 flex-1 text-right outline-none" />
                <span className="ml-1 flex flex-col gap-px">
                  <ChevronUp size={6} strokeWidth={3} />
                  <ChevronDown size={6} strokeWidth={3} />
                </span>
              </span>
              <select aria-label="Periodo" className="ml-[2px] w-[67px] appearance-none bg-[#dce3e6] text-center outline-none">
                <option>Periodo</option>
              </select>
              <input aria-label="Observaciones" placeholder="Observaciones" className="ml-1 min-w-0 flex-1 bg-[#dce3e6] px-[3px] outline-none placeholder:text-[#777]" />
              <button type="button" aria-label="Añadir" className="ml-[3px] flex w-[16px] items-center justify-center">
                <Disc color="#999ea1" size={12} width={3} />
              </button>
            </div>
          </div>
        ))}
        <div className="flex h-[33px] justify-end gap-1 pt-[7px] text-[9px] text-[#333]">
          <button type="button" className="h-[18px] w-[85px] border-2 border-[#2b5f86] bg-white leading-none">Crear</button>
          <button type="button" className="h-[18px] w-[85px] border border-[#b5b5b5] bg-white leading-none">Cancelar</button>
        </div>
      </form>
      <svg width="38" height="38" viewBox="0 0 38 38" className="pointer-events-none absolute -right-[8px] -bottom-[6px]">
        <defs>
          <radialGradient id="halo">
            <stop offset="0.4" stopColor="#fff" stopOpacity="0" />
            <stop offset="0.8" stopColor="#8fe8b4" stopOpacity="0.7" />
            <stop offset="1" stopColor="#5fdc96" />
          </radialGradient>
        </defs>
        <circle cx="19" cy="19" r="17.5" fill="url(#halo)" stroke="#62dd98" strokeWidth="2" />
        <path d="M19.5 17.5v11.5l2.700-2.500 1.900 4 1.900-1-1.900-3.700h3.500z" fill="#fff" stroke="#333" />
      </svg>
    </section>
  );
}

function VisitWindow() {
  return (
    <section className="absolute top-[101px] right-[112px] bottom-[124px] left-[177px] flex flex-col border border-[#a9a9a9] bg-white shadow-[0_0_5px_rgba(0,0,0,0.3)]">
      <header className="flex h-[19px] shrink-0 items-center bg-[#f9f9f9] pr-[9px] pl-[6px] font-['Noto_Sans',sans-serif] text-[7px] text-[#555]">
        <h2>14/12/2025 13:59 - NOMELO CREERIA, SITEVIERA - HC: 1 - Visita sucesiva - Dr Ernesto López (Test)</h2>
        <button type="button" aria-label="Minimizar" className="ml-auto"><Minus size={10} strokeWidth={1.5} /></button>
        <button type="button" aria-label="Cerrar visita" className="ml-[21px]"><X size={11} strokeWidth={1.5} /></button>
      </header>
      <div className="flex min-h-0 flex-1 overflow-hidden">
        <Exploration />
        <VisitSections />
      </div>
      <div className="pointer-events-none absolute inset-0 flex items-center justify-center">
        <ProgramDialog />
      </div>
    </section>
  );
}

export default function App() {
  return (
    <div className="relative flex h-screen min-h-[720px] flex-col overflow-hidden bg-black pt-[6px] pr-[3px] pb-px font-[Lato,sans-serif] text-[#333]">
      <header className="relative flex h-[24px] shrink-0 items-center bg-[#0a65b5] px-1 font-['Noto_Sans',sans-serif] text-[7px] text-white">
        <svg width="11" height="11" viewBox="0 0 22 22">
          <rect width="22" height="22" rx="4" fill="#d5f0ee" />
          <path d="M8 4h6v4h4v6h-4v4H8v-4H4V8h4z" fill="#6fbcb8" />
        </svg>
        <h1 className="flex-1 pr-[15px] text-center">
          NOMELO CREERIA, SITEVIERA <span className="text-[#b4d3ee]">- Ofimedic - Gestión médica</span>
        </h1>
        <div className="absolute right-[10px] flex gap-[23px] text-[#7fb2e0]">
          <button type="button" aria-label="Minimizar ventana"><Minus size={9} /></button>
          <button type="button" aria-label="Maximizar ventana"><Square size={9} /></button>
          <button type="button" aria-label="Cerrar ventana" className="text-[#b4d3ee]"><X size={10} /></button>
        </div>
      </header>

      <nav className="flex h-[18px] shrink-0 items-center bg-[#ececec] pl-[9px] text-[9px]">
        {menu.map((item) => (
          <button key={item.label} type="button" className={`shrink-0 text-left whitespace-nowrap ${item.width}`}>
            {item.label}
          </button>
        ))}
        <button type="button" aria-label="Ventanas" className="mr-1 ml-auto flex h-4 w-[30px] items-center justify-center gap-[3px] border border-[#dedede] bg-[#fafafa]">
          <WindowIcon />
          <ChevronDown size={6} strokeWidth={3} />
        </button>
      </nav>

      <main className="flex min-h-0 flex-1 bg-[#f7f7f7]">
        <aside className="flex w-[19px] shrink-0 flex-col items-center border-r border-[#dcdcdc] pt-[10px] pr-1 font-['Noto_Sans',sans-serif] text-[7px]">
          <button type="button" className="flex flex-col items-center gap-[2px] leading-none">
            <svg width="7" height="9" viewBox="0 0 14 18">
              <path d="M0 0h14v18H0z" fill="#333" />
              <path d="M3 4l5 5 5-5" stroke="#fff" strokeWidth="2" fill="none" />
            </svg>
            <span className="[writing-mode:vertical-rl]">Mensajes</span>
          </button>
          <button type="button" className="mt-[20px] flex flex-col items-center gap-[2px] leading-none">
            <GreenPlus />
            <span className="[writing-mode:vertical-rl]">Crear...</span>
          </button>
        </aside>

        <div className="flex min-w-0 flex-1 flex-col">
          <div className="flex h-[18px] shrink-0 items-end pt-px font-['Noto_Sans',sans-serif] text-[7px]">
            <button type="button" className="flex h-full w-[153px] items-center border border-b-0 border-[#c9c9c9] border-t-[#555] bg-[#f9f9f9] pl-2">
              <CubeIcon />
              <span className="ml-[2px] whitespace-nowrap">NOMELO CREERIA, SITEVIERA</span>
              <span className="ml-[9px]"><PinIcon /></span>
              <X size={7} className="ml-[6px]" />
            </button>
            <div className="ml-auto flex h-full items-center gap-[8px] pr-1 text-[#666]">
              <svg width="4" height="2" viewBox="0 0 4 2"><path d="M0 0h4L2 2z" fill="#444" /></svg>
              <X size={8} />
            </div>
          </div>
          <Toolbar />

          <div className="flex min-h-0 flex-1 flex-col border-b border-[#d2d2d2]">
            <div className="flex h-[407px] shrink-0 pr-[5px]">
              <aside className="flex w-[28px] shrink-0 flex-col items-center pt-[12px] pr-2 font-['Noto_Sans',sans-serif] text-[7px] leading-none">
                <svg width="10" height="7" viewBox="0 0 20 14">
                  <path d="M0 7h7" stroke="#444" strokeWidth="2.5" />
                  <circle cx="13" cy="7" r="6.5" fill="#e08a2e" />
                </svg>
                <span className="mt-1 [writing-mode:vertical-rl]">Notas</span>
                <span className="mt-[17px] [writing-mode:vertical-rl]">Documentos administrativos</span>
                <span className="mt-4 [writing-mode:vertical-rl]">Multimedia</span>
              </aside>
              <PatientSummary />
              <VisitList />
            </div>
            <div className="flex h-[37px] shrink-0 items-center pt-[2px] pr-2 pl-[33px] font-['Noto_Sans',sans-serif] text-[7px]">
              <label className="flex w-[112px] items-center gap-px">
                <input type="checkbox" className="h-[10px] w-[10px] appearance-none border border-[#aaa] bg-white" />
                Mostrar leyenda
              </label>
              <span>Lateralidad</span>
              <div className="ml-auto flex gap-[10px]">
                {["7", "31", "1/2", "365"].map((range) => (
                  <button key={range} type="button" aria-label={`Rango ${range}`}>
                    <CalendarIcon text={range} />
                  </button>
                ))}
              </div>
            </div>
            <div className="flex pl-[21px]">
              <Timeline />
            </div>
          </div>
        </div>
      </main>

      <footer className="shrink-0 bg-[#f7f7f7] font-['Noto_Sans',sans-serif] text-[7px] text-[#444]">
        <div className="flex h-[22px] items-center pt-[3px] pl-[29px]">
          <a href="#pacientes" className="flex w-[127px] items-center gap-px whitespace-nowrap"><MagnifierIcon />Búsqueda de pacientes/visitas</a>
          <a href="#contactos" className="flex w-[106px] items-center gap-px whitespace-nowrap"><MagnifierIcon />Búsqueda de contactos</a>
          <a href="#salas" className="flex w-[80px] items-center gap-px whitespace-nowrap"><ChairIcon />Salas de espera</a>
          <a href="#consultas" className="flex items-center gap-[3px] whitespace-nowrap"><ConsultIcon />Consultas</a>
        </div>
        <div className="flex h-[15px] items-center border-t border-[#dcdcdc] bg-[#f2f2f2]">
          <Combo label="Paciente" width="w-[67px]" />
          <span className="ml-[5px]"><Combo label="Visitas" value="Visita del día" width="w-[67px]" /></span>
          <span className="mr-[5px] ml-[5px]"><Divider /></span>
          <ToolButton width="w-[58px]" icon={<AgendaIcon />} label="Agendas" caret />
          <Combo label="Agenda" width="w-[67px]" />
          <span className="mr-[6px] ml-[5px]"><Divider /></span>
          <ToolButton width="w-[101px]" icon={<ConsoleIcon />} label="Consolas de recepción" caret />
          <Combo label="Consola" width="w-[67px]" />
          <span className="mr-[6px] ml-[6px]"><Divider /></span>
          <ToolButton width="w-[70px]" icon={<FastIcon />} label="Visitas rápidas" />
          <ToolButton width="w-[63px]" icon={<ReviewIcon />} label="Revisión día" />
          <ToolButton width="w-[52px]" icon={<RefreshCw size={8} strokeWidth={3} className="text-[#2e9a4a]" />} label="Refrescar" />
          <Divider />
          <ToolButton width="ml-[7px] w-[95px]" icon={<OfficeIcon />} label="Office 2019 Colorful" caret />
          <ToolButton
            width="w-[57px]"
            icon={<svg width="11" height="10" viewBox="0 0 11 10"><path d="M0 0h11v6H0z" fill="#17608f" /></svg>}
            label="Default"
            caret
          />
          <ToolButton width="w-[40px]" icon={<Disc color="#c3202f" cross />} label="Salir" />
        </div>
        <div className="flex h-[15px] items-center justify-end gap-[7px] border-t border-[#dcdcdc] bg-[#ebebeb] pr-1">
          <Divider />
          <span className="flex w-[96px] items-center gap-1 whitespace-nowrap">
            <svg width="8" height="9" viewBox="0 0 16 18"><circle cx="8" cy="5" r="4.5" fill="#5aa58c" /><path d="M0 17c0-5 4-6 8-6s8 1 8 6z" fill="#5aa58c" /></svg>
            Usuario: david.andreutest
          </span>
          <Divider />
          <span className="flex w-[52px] items-center gap-1 whitespace-nowrap">
            <svg width="9" height="6" viewBox="0 0 18 12"><path d="M3 12a3 3 0 010-6 5 5 0 019-3 4 4 0 014 3 3 3 0 010 6z" fill="#555" /></svg>
            Modo Cloud
          </span>
          <Divider />
          <span className="flex w-[13px] justify-center">
            <svg width="10" height="10" viewBox="0 0 20 20"><path d="M1 4h14v11l-4 4H1z" fill="#ecc069" /><path d="M8 11l9-9 2 2-9 9z" fill="#3a6ea5" /></svg>
          </span>
          <Divider />
          <span className="flex w-[52px] items-center gap-1 whitespace-nowrap">
            <svg width="9" height="9" viewBox="0 0 18 18" className="shrink-0"><path d="M1 1h16v16H1z" fill="#fff" stroke="#444" strokeWidth="1.5" /><path d="M3 15l4-8 4 5 2-2 2 5z" fill="#3d9a5b" /><circle cx="13" cy="6" r="1.5" fill="#3d9a5b" /></svg>
            20 imágenes
          </span>
          <Divider />
          <span className="w-[31px]">v7.6.14.0</span>
          <Divider />
          <span className="w-[37px]">14/12/2025</span>
          <Divider />
          <span className="w-[23px]">14:14</span>
          <svg width="7" height="7" viewBox="0 0 7 7"><path d="M5 0h2v2H5zM5 3h2v1H5zM3 3h1v1H3zM5 6h2v1H5zM3 6h1v1H3zM0 6h1v1H0z" fill="#aaa" /></svg>
        </div>
      </footer>

      <VisitWindow />
    </div>
  );
}
